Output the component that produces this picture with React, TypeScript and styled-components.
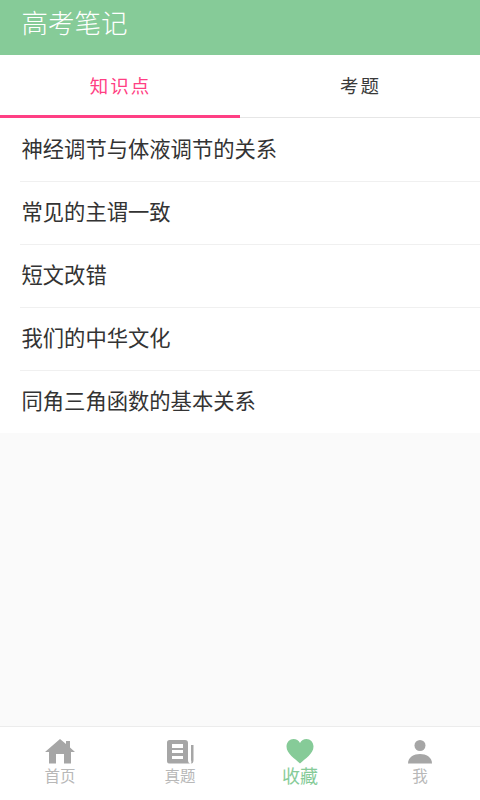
import { useState } from "react";
import styled, { createGlobalStyle } from "styled-components";

const GlobalStyle = createGlobalStyle`
  html, body {
    margin: 0;
    padding: 0;
    height: 100%;
  }
  body {
    font-family: "Noto Sans CJK SC", "Liberation Sans", sans-serif;
    background-color: #fafafa;
  }
  #root {
    height: 100%;
  }
`;

const Page = styled.div`
  display: flex;
  flex-direction: column;
  width: 480px;
  height: 800px;
  overflow: hidden;
`;

const Header = styled.div`
  display: flex;
  align-items: center;
  height: 55px;
  padding: 0 0 10px 21.5px;
  box-sizing: border-box;
  background-color: #86cb98;
  color: white;
  font-size: 26.5px;
  font-weight: 300;
  line-height: 1;
`;

const Tabs = styled.div`
  display: flex;
  height: 63px;
  background-color: white;
  border-bottom: 1px solid #e6e6e6;
  box-sizing: border-box;
`;

const Tab = styled.div<{ $active?: boolean }>`
  flex: 1;
  display: flex;
  align-items: center;
  justify-content: center;
  height: 63px;
  padding-left: 1px;
  box-sizing: border-box;
  font-size: 18.5px;
  letter-spacing: 2px;
  color: ${(p) => (p.$active ? "#ff3f84" : "#3a3a3a")};
  border-bottom: 3px solid ${(p) => (p.$active ? "#ff3f84" : "transparent")};
`;

const List = styled.div`
  background-color: white;
  padding: 1px 0 0 20px;
`;

const Row = styled.div`
  display: flex;
  align-items: center;
  height: 63px;
  padding: 0 0 6px 1.5px;
  box-sizing: border-box;
  font-size: 21.3px;
  color: #333;
  border-bottom: 1px solid #f0f0f0;
  &:last-child {
    height: 62px;
    border-bottom: 0;
  }
`;

const Spacer = styled.div`
  flex: 1;
`;

const BottomBar = styled.div`
  display: flex;
  height: 73px;
  background-color: white;
  border-top: 1px solid #ececec;
  box-sizing: content-box;
`;

const NavItem = styled.div<{ $active?: boolean }>`
  flex: 1;
  display: flex;
  flex-direction: column;
  align-items: center;
  padding-top: 12px;
  color: ${(p) => (p.$active ? "#86cb98" : "#b8b8b8")};
`;

const IconBox = styled.svg`
  display: block;
  width: 32px;
  height: 26px;
`;

const NavLabel = styled.div<{ $active?: boolean }>`
  font-size: ${(p) => (p.$active ? "18px" : "15.5px")};
  line-height: ${(p) => (p.$active ? "22px" : "20px")};
  margin-top: ${(p) => (p.$active ? "-1px" : "0")};
`;

const HomeIcon = () => (
  <IconBox viewBox="0 0 32 26">
    <path
      fill="#a6a6a6"
      d="M16 0 L22 5 V2 H26 V8.4 L31 13 H27 V24.5 H20 V15 H12 V24.5 H5 V13 H1 Z"
    />
  </IconBox>
);

const NewsIcon = () => (
  <IconBox viewBox="0 0 32 26">
    <path
      fill="#a6a6a6"
      fillRule="evenodd"
      d="M5.5 1 H21 Q24 1 24 4 V21 Q24 24.5 27 24.5 H5.5 Q3 24.5 3 22 V3.5 Q3 1 5.5 1 Z M8 5 V9 H19 V5 Z M8 11 V14 H19 V11 Z M8 17 V20 H19 V17 Z"
    />
    <path fill="#a6a6a6" d="M27 6 H29.5 V21 Q29.5 24.5 27 24.5 Q27.8 23 27 21 Z" />
  </IconBox>
);

const HeartIcon = () => (
  <IconBox viewBox="0 0 32 26">
    <path
      fill="#86cb98"
      d="M16 24.5 C11 19.5 2.5 15 2.5 7.5 C2.5 3 5.8 0 9.5 0 C12.3 0 14.7 1.5 16 3.9 C17.3 1.5 19.7 0 22.5 0 C26.2 0 29.5 3 29.5 7.5 C29.5 15 21 19.5 16 24.5 Z"
    />
  </IconBox>
);

const UserIcon = () => (
  <IconBox viewBox="0 0 32 26">
    <circle cx="16" cy="6.5" r="5.5" fill="#a6a6a6" />
    <path fill="#a6a6a6" d="M4 24.5 C4 18 10 15 16 15 C22 15 28 18 28 24.5 Z" />
  </IconBox>
);

const notes = [
  "神经调节与体液调节的关系",
  "常见的主谓一致",
  "短文改错",
  "我们的中华文化",
  "同角三角函数的基本关系",
];

const navItems = [
  { label: "首页", icon: <HomeIcon /> },
  { label: "真题", icon: <NewsIcon /> },
  { label: "收藏", icon: <HeartIcon />, active: true },
  { label: "我", icon: <UserIcon /> },
];

export default function App() {
  const [tab, setTab] = useState(0);

  return (
    <Page>
      <GlobalStyle />
      <Header>高考笔记</Header>
      <Tabs>
        {["知识点", "考题"].map((name, i) => (
          <Tab key={name} $active={tab === i} onClick={() => setTab(i)}>
            {name}
          </Tab>
        ))}
      </Tabs>
      <List>
        {notes.map((note) => (
          <Row key={note}>{note}</Row>
        ))}
      </List>
      <Spacer />
      <BottomBar>
        {navItems.map((item) => (
          <NavItem key={item.label} $active={item.active}>
            {item.icon}
            <NavLabel $active={item.active}>{item.label}</NavLabel>
          </NavItem>
        ))}
      </BottomBar>
    </Page>
  );
}
